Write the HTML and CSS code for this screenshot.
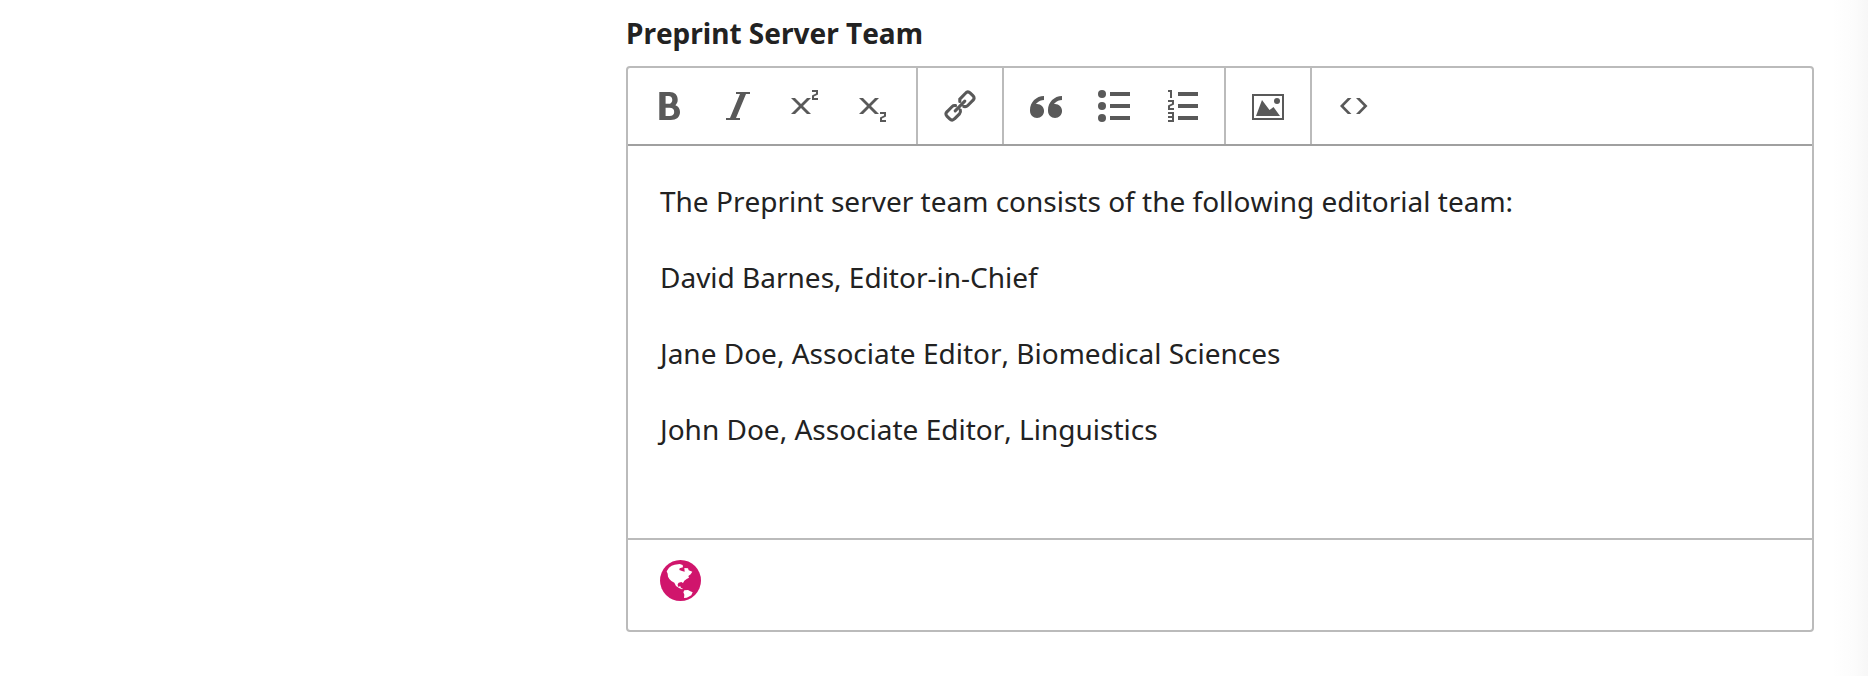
FILE: index.html
```html
<!DOCTYPE html>
<html lang="en">
<head>
<meta charset="utf-8">
<title>Preprint Server Team</title>
<link rel="stylesheet" href="styles.css">
</head>
<body>
<main class="page">
  <section class="field">
    <h2 class="field-label">Preprint Server Team</h2>
    <div class="editor">
      <div class="toolbar">
        <div class="group">
          <span class="button"><svg viewBox="0 0 32 32"><path fill-rule="evenodd" d="M21.400 15.145c1.500-1.200 2.300-3 2.300-5.345 0-4.800-3-7.800-8-7.800H5.300v28h11.500c5.600 0 9.200-3 9.200-8 0-3.400-1.700-5.800-4.600-6.855zM11.600 6h2.900c2.300 0 3.800 1.500 3.800 3.900s-1.500 3.900-3.800 3.900h-2.900zM15.600 26h-4v-8.200h4c2.800 0 4.600 1.500 4.600 4.100s-1.800 4.100-4.600 4.100z"/></svg></span>
          <span class="button"><svg viewBox="0 0 32 32"><path d="M28 2v2h-4l-10 24h4v2h-14v-2h4l10-24h-4v-2z"/></svg></span>
          <span class="button"><svg viewBox="0 0 32 32"><path d="M21 8h-4l-6 6-6-6h-4l8 8-8 8h4l6-6 6 6h4l-8-8zM24 6.438v1.562h4v2h-6v-4.563l4-1.875v-1.562h-4v-2h6v4.563z"/></svg></span>
          <span class="button"><svg viewBox="0 0 32 32"><path d="M21 8h-4l-6 6-6-6h-4l8 8-8 8h4l6-6 6 6h4l-8-8zM24 28.438v1.562h4v2h-6v-4.563l4-1.875v-1.562h-4v-2h6v4.563z"/></svg></span>
        </div>
        <div class="group">
          <span class="button"><svg class="line" viewBox="0 0 32 32"><path d="M11.200 20.800l9.600-9.600M15.800 11.500V9.200L21.500 3.200Q23.800 .6 26.300 3.100L28.900 5.700Q31.400 8.200 28.800 10.500L23.800 15.500Q22.300 17 19.800 16.500M11.500 15.600Q9.500 15.200 8.200 16.500L3.200 21.500Q.6 23.800 3.100 26.300L5.700 28.900Q8.200 31.400 10.500 28.800L15.500 23.800Q17 22.300 16.300 20"/></svg></span>
        </div>
        <div class="group">
          <span class="button"><svg viewBox="0 0 32 32"><path id="quote" d="M7.031 14c3.866 0 7 3.134 7 7s-3.134 7-7 7-7-3.134-7-7l-.031-1c0-7.732 6.268-14 14-14v4c-2.671 0-5.182 1.040-7.071 2.929-.364.364-.695.751-.995 1.157.357-.056.724-.086 1.097-.086z"/><use href="#quote" x="18"/></svg></span>
          <span class="button"><svg viewBox="0 0 32 32"><circle cx="4" cy="4" r="4"/><circle cx="4" cy="16" r="4"/><circle cx="4" cy="28" r="4"/><path d="M12 2h20v4H12zM12 14h20v4H12zM12 26h20v4H12z"/></svg></span>
          <span class="button"><svg viewBox="0 0 32 32"><path d="M12 26h20v4H12zM12 14h20v4H12zM12 2h20v4H12zM6 0v8H4V2H2V0zM4 16.438V18h4v2H2v-4.563l4-1.875V12H2v-2h6v4.563zM8 22v10H2v-2h4v-2H2v-2h4v-2H2v-2z"/></svg></span>
        </div>
        <div class="group">
          <span class="button"><svg viewBox="0 0 32 32"><path fill-rule="evenodd" d="M0 4v26h32V4zM30 28H2V6h28z"/><circle cx="25" cy="11" r="3"/><path d="M28 26H4l6-16 7.500 10 4-3z"/></svg></span>
        </div>
        <div class="group last">
          <span class="button"><svg viewBox="0 0 32 32"><path d="M9.800 8l-7.800 8 7.800 8h3.700l-7.800-8 7.800-8zM21.700 8l7.800 8-7.800 8H18l7.800-8L18 8z"/></svg></span>
        </div>
      </div>
      <div class="content">
        <p>The Preprint server team consists of the following editorial team:</p>
        <p>David Barnes, Editor-in-Chief</p>
        <p>Jane Doe, Associate Editor, Biomedical Sciences</p>
        <p>John Doe, Associate Editor, Linguistics</p>
      </div>
      <div class="footer">
        <svg class="globe" viewBox="0 0 123 123"><circle class="sea" cx="61.500" cy="61.500" r="61.500"/><path class="land" d="M20 34L27 23 35 17 44 14 59 12 68 15 69 22 59 25 58 30 66 33 74 35 73 24 84 25 86 31 97 35 92 43 85 48 87 53 80 57 73 62 69 69 64 66 56 68 53 73 54 80 61 79 63 84 69 86 66 88 57 84 48 78 43 68 34 63 28 57 24 50 23 41z"/><path class="land" d="M73 91L84 90 91 94 98 97 94 106 86 110 80 113 72 114 73 104 70 97z"/></svg>
      </div>
    </div>
  </section>
  <div class="edge"></div>
</main>
</body>
</html>
```
FILE: styles.css
```css
* { box-sizing: border-box; }
body {
  margin: 0;
  background: #fff;
  color: #222;
  font: 28px/40px "Noto Sans", sans-serif;
  font-kerning: none;
}
.page {
  display: flex;
  height: 676px;
  padding-left: 626px;
  justify-content: space-between;
  overflow: hidden;
}
.field { width: 1188px; padding-top: 13px; }
.field-label { margin: 0 0 13px; font-size: 28px; line-height: 40px; font-weight: 700; }
.editor {
  display: flex;
  flex-direction: column;
  height: 566px;
  border: 2px solid #bbb;
  border-radius: 4px;
}
.toolbar { display: flex; height: 78px; border-bottom: 2px solid #a0a0a0; }
.group { display: flex; align-items: center; padding: 0 8px; border-right: 2px solid #bbb; }
.group.last { border-right: 0; }
.button { display: flex; width: 68px; justify-content: center; }
.button svg { width: 32px; height: 32px; fill: #595959; overflow: visible; }
.button .line { fill: none; stroke: #595959; stroke-width: 3.1; stroke-linecap: round; }
.content { flex: 1; padding: 35px 32px 0; }
.content p { margin: 0 0 36px; }
.footer { height: 92px; padding: 20px 32px; border-top: 2px solid #bbb; }
.globe { display: block; width: 41px; height: 41px; }
.sea { fill: #d0156c; }
.land { fill: #fff; }
.edge { width: 36px; background: linear-gradient(to right, #fff, #fcfcfc 60%, #f7f7f7); }
```
